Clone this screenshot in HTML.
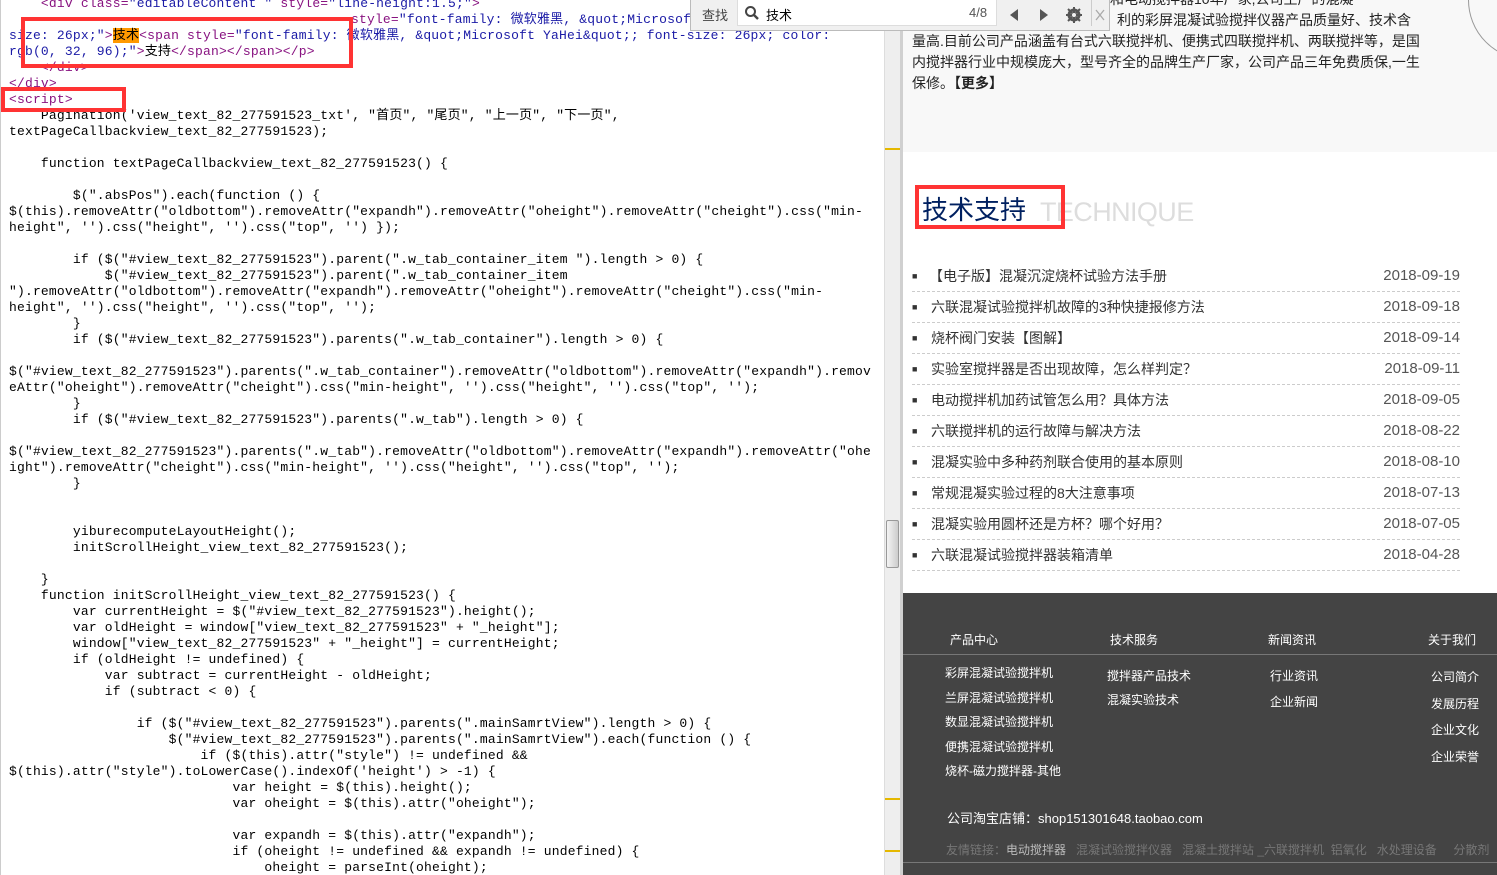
<!DOCTYPE html>
<html><head><meta charset="utf-8"><style>
*{margin:0;padding:0;box-sizing:border-box}
body{width:1497px;height:875px;overflow:hidden;position:relative;background:#fff;font-family:"Liberation Sans","Noto Sans CJK SC",sans-serif}
#code{position:absolute;left:0;top:0;width:884px;height:875px;background:#fff;border-left:1px solid #ccc;overflow:hidden}
#code .in{position:absolute;left:0;top:1px;width:884px;height:875px}
.l{position:absolute;left:8px;white-space:pre;font:13px/16px "Liberation Mono","Noto Sans CJK SC",monospace;letter-spacing:0.18px;color:#000}
.t{color:#881280}.a{color:#1a1aa6}
#sb{position:absolute;left:884px;top:0;width:16px;height:875px;background:#eee;border-left:1px solid #ddd}
#sb .th{position:absolute;left:1px;top:520px;width:13px;height:48px;background:linear-gradient(90deg,#f4f4f4,#ccc);border:1px solid #999;border-radius:2px}
.mk{position:absolute;left:0;width:16px;height:2px;background:#e5b800}
#sep{position:absolute;left:900px;top:0;width:3px;height:875px;background:#d0d0d0}
#right{position:absolute;left:903px;top:0;width:594px;height:875px;background:#fff;overflow:hidden}
.box{position:absolute;border:4px solid #f33}
.row{height:31px;border-bottom:1px dashed #ccc;position:relative;line-height:30px}
.row .b{position:absolute;left:0;top:0;font-size:9px}
.row .d{position:absolute;right:0;font-size:15px;color:#555}
.row .x{margin-left:19px}
</style></head><body>
<div id="code"><div class="in">
<div class="l" style="top:-5px"><span class="t">    &lt;div class=</span><span class="a">"editableContent "</span><span class="t"> style=</span><span class="a">"line-height:1.5;"</span><span class="t">&gt;</span></div>
<div class="l" style="top:11px;left:350px"><span class="t">style=</span><span class="a">"font-family: 微软雅黑, &amp;quot;Microsof</span></div>
<div class="l" style="top:27px"><span class="a">size: 26px;"</span><span class="t">&gt;</span><span style="background:#f90">技术</span><span class="t">&lt;span style=</span><span class="a">"font-family: 微软雅黑, &amp;quot;Microsoft YaHei&amp;quot;; font-size: 26px; color:</span></div>
<div class="l" style="top:43px"><span class="a">rgb(0, 32, 96);"</span><span class="t">&gt;</span>支持<span class="t">&lt;/span&gt;&lt;/span&gt;&lt;/p&gt;</span></div>
<div class="l" style="top:59px"><span class="t">    &lt;/div&gt;</span></div>
<div class="l" style="top:75px"><span class="t">&lt;/div&gt;</span></div>
<div class="l" style="top:91px"><span class="t">&lt;script&gt;</span></div>
<div class="l" style="top:107px">    Pagination('view_text_82_277591523_txt', "首页", "尾页", "上一页", "下一页",</div>
<div class="l" style="top:123px">textPageCallbackview_text_82_277591523);</div>
<div class="l" style="top:155px">    function textPageCallbackview_text_82_277591523() {</div>
<div class="l" style="top:187px">        $(".absPos").each(function () {</div>
<div class="l" style="top:203px">$(this).removeAttr("oldbottom").removeAttr("expandh").removeAttr("oheight").removeAttr("cheight").css("min-</div>
<div class="l" style="top:219px">height", '').css("height", '').css("top", '') });</div>
<div class="l" style="top:251px">        if ($("#view_text_82_277591523").parent(".w_tab_container_item ").length &gt; 0) {</div>
<div class="l" style="top:267px">            $("#view_text_82_277591523").parent(".w_tab_container_item</div>
<div class="l" style="top:283px">").removeAttr("oldbottom").removeAttr("expandh").removeAttr("oheight").removeAttr("cheight").css("min-</div>
<div class="l" style="top:299px">height", '').css("height", '').css("top", '');</div>
<div class="l" style="top:315px">        }</div>
<div class="l" style="top:331px">        if ($("#view_text_82_277591523").parents(".w_tab_container").length &gt; 0) {</div>
<div class="l" style="top:363px">$("#view_text_82_277591523").parents(".w_tab_container").removeAttr("oldbottom").removeAttr("expandh").remov</div>
<div class="l" style="top:379px">eAttr("oheight").removeAttr("cheight").css("min-height", '').css("height", '').css("top", '');</div>
<div class="l" style="top:395px">        }</div>
<div class="l" style="top:411px">        if ($("#view_text_82_277591523").parents(".w_tab").length &gt; 0) {</div>
<div class="l" style="top:443px">$("#view_text_82_277591523").parents(".w_tab").removeAttr("oldbottom").removeAttr("expandh").removeAttr("ohe</div>
<div class="l" style="top:459px">ight").removeAttr("cheight").css("min-height", '').css("height", '').css("top", '');</div>
<div class="l" style="top:475px">        }</div>
<div class="l" style="top:523px">        yiburecomputeLayoutHeight();</div>
<div class="l" style="top:539px">        initScrollHeight_view_text_82_277591523();</div>
<div class="l" style="top:571px">    }</div>
<div class="l" style="top:587px">    function initScrollHeight_view_text_82_277591523() {</div>
<div class="l" style="top:603px">        var currentHeight = $("#view_text_82_277591523").height();</div>
<div class="l" style="top:619px">        var oldHeight = window["view_text_82_277591523" + "_height"];</div>
<div class="l" style="top:635px">        window["view_text_82_277591523" + "_height"] = currentHeight;</div>
<div class="l" style="top:651px">        if (oldHeight != undefined) {</div>
<div class="l" style="top:667px">            var subtract = currentHeight - oldHeight;</div>
<div class="l" style="top:683px">            if (subtract &lt; 0) {</div>
<div class="l" style="top:715px">                if ($("#view_text_82_277591523").parents(".mainSamrtView").length &gt; 0) {</div>
<div class="l" style="top:731px">                    $("#view_text_82_277591523").parents(".mainSamrtView").each(function () {</div>
<div class="l" style="top:747px">                        if ($(this).attr("style") != undefined &amp;&amp;</div>
<div class="l" style="top:763px">$(this).attr("style").toLowerCase().indexOf('height') &gt; -1) {</div>
<div class="l" style="top:779px">                            var height = $(this).height();</div>
<div class="l" style="top:795px">                            var oheight = $(this).attr("oheight");</div>
<div class="l" style="top:827px">                            var expandh = $(this).attr("expandh");</div>
<div class="l" style="top:843px">                            if (oheight != undefined &amp;&amp; expandh != undefined) {</div>
<div class="l" style="top:859px">                                oheight = parseInt(oheight);</div>
</div>
<div style="position:absolute;left:24px;top:21px;width:324px;height:6px;background:#fff"></div>
<div class="box" style="left:20px;top:17px;width:332px;height:51px"></div>
<div class="box" style="left:0;top:87px;width:125px;height:25px"></div>
</div>
<div id="sb"><div class="th"></div>
<div class="mk" style="top:148px"></div><div class="mk" style="top:798px"></div><div class="mk" style="top:850px"></div></div>
<div id="sep"></div>

<div id="right">
<div style="position:absolute;left:0;top:0;width:594px;height:152px;background:#f8f8f8"></div>
<div style="position:absolute;left:565px;top:-60px;width:120px;height:120px;border:1px solid #999;border-radius:50%"></div>
<div style="position:absolute;left:9px;top:-11px;width:520px;font-size:14px;line-height:21px;color:#222">
<div style="padding-left:100px">混凝试验搅拌机和电动搅拌器10年厂家,公司生产的混凝</div>
<div style="padding-left:205px">利的彩屏混凝试验搅拌仪器产品质量好、技术含</div>
<div>量高.目前公司产品涵盖有台式六联搅拌机、便携式四联搅拌机、两联搅拌等，是国</div>
<div>内搅拌器行业中规模庞大，型号齐全的品牌生产厂家，公司产品三年免费质保,一生</div>
<div>保修。<b>【更多】</b></div>
</div>
<div style="position:absolute;left:19px;top:192px;font-size:26px;line-height:36px;color:#002060">技术支持</div>
<div style="position:absolute;left:137px;top:194px;font-size:27px;line-height:36px;color:#ddd;letter-spacing:-0.6px">TECHNIQUE</div>
<div class="box" style="left:12px;top:185px;width:150px;height:44px"></div>
<div style="position:absolute;left:9px;top:261px;width:548px;font-size:14px;color:#333">
<div class="row"><span class="b">■</span><span style="margin-left:17px">【电子版】混凝沉淀烧杯试验方法手册</span><span class="d">2018-09-19</span></div>
<div class="row"><span class="b">■</span><span class="x">六联混凝试验搅拌机故障的3种快捷报修方法</span><span class="d">2018-09-18</span></div>
<div class="row"><span class="b">■</span><span class="x">烧杯阀门安装【图解】</span><span class="d">2018-09-14</span></div>
<div class="row"><span class="b">■</span><span class="x">实验室搅拌器是否出现故障，怎么样判定？</span><span class="d">2018-09-11</span></div>
<div class="row"><span class="b">■</span><span class="x">电动搅拌机加药试管怎么用？具体方法</span><span class="d">2018-09-05</span></div>
<div class="row"><span class="b">■</span><span class="x">六联搅拌机的运行故障与解决方法</span><span class="d">2018-08-22</span></div>
<div class="row"><span class="b">■</span><span class="x">混凝实验中多种药剂联合使用的基本原则</span><span class="d">2018-08-10</span></div>
<div class="row"><span class="b">■</span><span class="x">常规混凝实验过程的8大注意事项</span><span class="d">2018-07-13</span></div>
<div class="row"><span class="b">■</span><span class="x">混凝实验用圆杯还是方杯？哪个好用？</span><span class="d">2018-07-05</span></div>
<div class="row"><span class="b">■</span><span class="x">六联混凝试验搅拌器装箱清单</span><span class="d">2018-04-28</span></div>
</div>

<div style="position:absolute;left:0;top:593px;width:594px;height:282px;background:#444;color:#fff;font-size:12px">
<div style="position:absolute;left:47px;top:38px">产品中心</div>
<div style="position:absolute;left:207px;top:38px">技术服务</div>
<div style="position:absolute;left:365px;top:38px">新闻资讯</div>
<div style="position:absolute;left:525px;top:38px">关于我们</div>
<div style="position:absolute;left:0;top:61px;width:594px;height:1px;background:#777"></div>
<div style="position:absolute;left:42px;top:68px;line-height:24.5px">彩屏混凝试验搅拌机<br>兰屏混凝试验搅拌机<br>数显混凝试验搅拌机<br>便携混凝试验搅拌机<br>烧杯-磁力搅拌器-其他</div>
<div style="position:absolute;left:204px;top:71px;line-height:24px">搅拌器产品技术<br>混凝实验技术</div>
<div style="position:absolute;left:367px;top:70px;line-height:26px">行业资讯<br>企业新闻</div>
<div style="position:absolute;left:528px;top:71px;line-height:26.6px">公司简介<br>发展历程<br>企业文化<br>企业荣誉</div>
<div style="position:absolute;left:44px;top:215px;font-size:13px">公司淘宝店铺：shop151301648.taobao.com</div>
<div style="position:absolute;left:43px;top:248px;color:#777;white-space:nowrap">友情链接：<span style="color:#bbb">电动搅拌器</span>&nbsp;&nbsp; 混凝试验搅拌仪器 &nbsp; 混凝土搅拌站 _六联搅拌机 &nbsp;铝氧化 &nbsp; 水处理设备 &nbsp; &nbsp; 分散剂</div>
<div style="position:absolute;left:0;top:269px;width:594px;height:1px;background:#777"></div>
</div>
</div>

<div style="position:absolute;left:690px;top:0;width:420px;height:31px;background:#f0f0f0;border:1px solid #bbb;border-top:none;font-size:13px;color:#444">
<div style="position:absolute;left:11px;top:5px">查找</div>
<div style="position:absolute;left:46px;top:0;width:260px;height:26px;background:#fff;border:1px solid #ddd;border-top:none">
<svg style="position:absolute;left:6px;top:5px" width="16" height="16"><circle cx="6.5" cy="6.5" r="4.5" fill="none" stroke="#444" stroke-width="2"/><path d="M10 10L14 14" stroke="#444" stroke-width="2.4"/></svg>
<span style="position:absolute;left:28px;top:5px;color:#000">技术</span>
<span style="position:absolute;left:231px;top:5px;color:#555">4/8</span></div>
<svg style="position:absolute;left:316px;top:7px" width="100" height="16"><path d="M11 2L3 8L11 14Z" fill="#555"/><path d="M33 2L41 8L33 14Z" fill="#555"/><circle cx="67" cy="8" r="5" fill="none" stroke="#555" stroke-width="3"/><path d="M67 0V16M59 8H75M61 2L73 14M73 2L61 14" stroke="#555" stroke-width="2"/><circle cx="67" cy="8" r="2" fill="#f0f0f0"/><path d="M89 3L97 13M97 3L89 13" stroke="#aaa" stroke-width="1.3"/></svg>
<div style="position:absolute;left:400px;top:0;width:1px;height:26px;background:#ccc"></div>
</div>
</body></html>
